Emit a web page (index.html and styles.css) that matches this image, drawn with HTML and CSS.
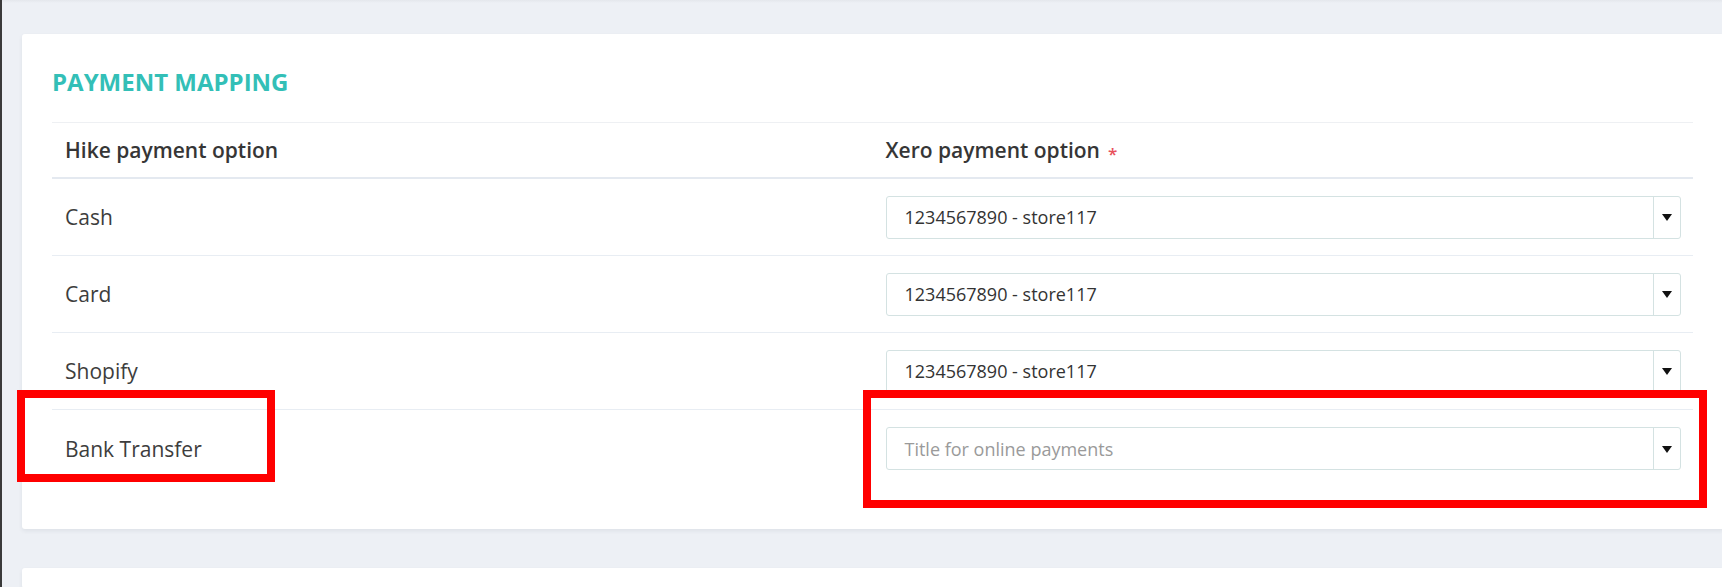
FILE: index.html
```html
<!DOCTYPE html>
<html lang="en">
<head>
<meta charset="utf-8">
<title>Payment Mapping</title>
<link rel="stylesheet" href="styles.css">
</head>
<body>
<div class="page">
  <section class="card">
    <h2 class="card-title">PAYMENT MAPPING</h2>
    <div class="mapping">
      <div class="row head">
        <div class="cell">Hike payment option</div>
        <div class="cell">Xero payment option <span class="req">*</span></div>
      </div>
      <div class="row">
        <div class="cell label">Cash</div>
        <div class="cell">
          <div class="select"><span class="value">1234567890 - store117</span><span class="caret"><i class="tri"></i></span></div>
        </div>
      </div>
      <div class="row">
        <div class="cell label">Card</div>
        <div class="cell">
          <div class="select"><span class="value">1234567890 - store117</span><span class="caret"><i class="tri"></i></span></div>
        </div>
      </div>
      <div class="row">
        <div class="cell label">Shopify</div>
        <div class="cell">
          <div class="select"><span class="value">1234567890 - store117</span><span class="caret"><i class="tri"></i></span></div>
        </div>
      </div>
      <div class="row last">
        <div class="cell label">Bank Transfer</div>
        <div class="cell">
          <div class="select"><span class="value placeholder">Title for online payments</span><span class="caret"><i class="tri"></i></span></div>
        </div>
      </div>
    </div>
  </section>
  <section class="card next"></section>
</div>
<div class="mark mark-left"></div>
<div class="mark mark-right"></div>
</body>
</html>
```

FILE: styles.css
```css
html, body {
  margin: 0;
  padding: 0;
}
body {
  width: 1722px;
  height: 587px;
  overflow: hidden;
  position: relative;
  background: #edf0f5;
  font-family: "Open Sans", "Noto Sans", sans-serif;
  color: #333;
}
.page {
  height: 587px;
  overflow: hidden;
  box-sizing: border-box;
  border-left: 2px solid #3a3a3a;
  padding: 34px 0 0 20px;
  display: flex;
  flex-direction: column;
  gap: 39px;
  background: linear-gradient(#e4e7ec, #edf0f5 3px);
}
.card {
  width: 1702px;
  background: #fff;
  border-radius: 3px;
  box-shadow: 0 2px 4px rgba(30, 40, 60, 0.07);
  box-sizing: border-box;
  padding: 32px 31px 42px 30px;
  flex: none;
}
.card.next {
  height: 20px;
  padding: 0;
}
.card-title {
  margin: 0 0 24px;
  font-size: 24px;
  line-height: 32px;
  font-weight: 700;
  color: #33bfb7;
  letter-spacing: 0;
}
.mapping {
  border-top: 1px solid #eef0f3;
}
.row {
  display: flex;
  height: 77px;
  box-sizing: border-box;
  border-bottom: 1px solid #e8edf3;
  align-items: center;
}
.row.head {
  height: 56px;
  border-bottom: 2px solid #e4e9f0;
  font-weight: 600;
  font-size: 21px;
  color: #363636;
}
.row.last {
  border-bottom: none;
}
.cell {
  flex: 1 1 0;
  padding: 0 12px 0 13px;
  box-sizing: border-box;
  display: flex;
  align-items: center;
}
.cell.label {
  font-size: 21px;
  color: #3d3d3d;
}
.req {
  color: #e8505b;
  font-size: 17px;
  margin-left: 8px;
  position: relative;
  top: 3px;
}
.select {
  flex: 1;
  height: 43px;
  box-sizing: border-box;
  border: 1px solid #d4e2e2;
  border-radius: 3px;
  display: flex;
  align-items: stretch;
  background: #fff;
}
.value {
  flex: 1;
  display: flex;
  align-items: center;
  padding-left: 18px;
  font-size: 18px;
  color: #333;
}
.value.placeholder {
  color: #9a9a9a;
}
.caret {
  width: 26px;
  border-left: 1px solid #d4e2e2;
  display: flex;
  align-items: center;
  justify-content: center;
}
.tri {
  width: 0;
  height: 0;
  border-left: 5px solid transparent;
  border-right: 5px solid transparent;
  border-top: 7px solid #111;
  margin-top: 1px;
}
.mark {
  position: absolute;
  box-sizing: border-box;
  border: 8px solid #ff0000;
}
.mark-left {
  left: 17px;
  top: 390px;
  width: 258px;
  height: 92px;
}
.mark-right {
  left: 863px;
  top: 390px;
  width: 844px;
  height: 118px;
}
```
